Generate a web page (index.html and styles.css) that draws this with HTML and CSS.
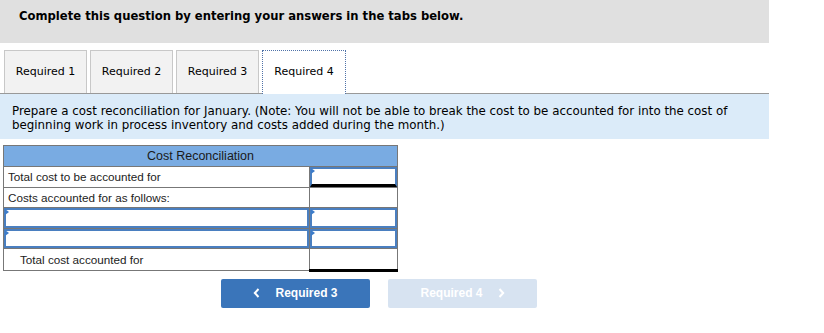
FILE: index.html
```html
<!DOCTYPE html>
<html lang="en">
<head>
  <meta charset="UTF-8">
  <meta name="viewport" content="width=device-width, initial-scale=1.0">
  <title>Cost Reconciliation</title>
  <link rel="stylesheet" href="styles.css">
</head>
<body>
  <div class="page">
    <div class="prompt">Complete this question by entering your answers in the tabs below.</div>

    <div class="tabs">
      <div class="tab">Required 1</div>
      <div class="tab">Required 2</div>
      <div class="tab">Required 3</div>
      <div class="tab active">Required 4</div>
    </div>

    <div class="instructions">
      Prepare a cost reconciliation for January. (Note: You will not be able to break the cost to be accounted for into the cost of beginning work in process inventory and costs added during the month.)
    </div>

    <table class="recon">
      <colgroup>
        <col class="col-label">
        <col class="col-value">
      </colgroup>
      <thead>
        <tr>
          <th colspan="2">Cost Reconciliation</th>
        </tr>
      </thead>
      <tbody>
        <tr>
          <td class="label">Total cost to be accounted for</td>
          <td class="value"><div class="field total"></div></td>
        </tr>
        <tr>
          <td class="label">Costs accounted for as follows:</td>
          <td class="value"></td>
        </tr>
        <tr>
          <td class="label input"><div class="field"></div></td>
          <td class="value"><div class="field"></div></td>
        </tr>
        <tr>
          <td class="label input"><div class="field"></div></td>
          <td class="value"><div class="field"></div></td>
        </tr>
        <tr>
          <td class="label indent">Total cost accounted for</td>
          <td class="value double"></td>
        </tr>
      </tbody>
    </table>

    <div class="nav">
      <button class="nav-btn prev">
        <svg class="chev" width="7" height="10" viewBox="0 0 7 10"><path d="M5.5 1 L1.8 5 L5.5 9" fill="none" stroke="#fff" stroke-width="2"/></svg>
        Required 3
      </button>
      <button class="nav-btn next" disabled>
        Required 4
        <svg class="chev" width="7" height="10" viewBox="0 0 7 10"><path d="M1.5 1 L5.2 5 L1.5 9" fill="none" stroke="#fff" stroke-width="2"/></svg>
      </button>
    </div>
  </div>
</body>
</html>
```

FILE: styles.css
```css
body {
  margin: 0;
  padding: 0;
  background-color: #fff;
  font-family: "DejaVu Sans", Verdana, sans-serif;
  color: #000;
}

.page {
  width: 769px;
}

.prompt {
  background-color: #e0e0e0;
  height: 43px;
  box-sizing: border-box;
  padding: 9px 0 0 19px;
  font-size: 11.6px;
  font-weight: bold;
}

.tabs {
  display: flex;
  gap: 3px;
  margin-top: 7px;
  padding-left: 4px;
  border-bottom: 1px solid #999;
  height: 43px;
}

.tab {
  width: 83px;
  box-sizing: border-box;
  border: 1px solid #c8c8c8;
  border-bottom: none;
  background-color: #f2f2f2;
  font-size: 11px;
  text-align: center;
  line-height: 42px;
}

.tab.active {
  width: 84px;
  background-color: #fff;
  border: 1px dotted #4f72a8;
  border-bottom: none;
  height: 44px;
}

.instructions {
  background-color: #dbebf9;
  height: 45px;
  box-sizing: border-box;
  padding: 10px 12px 0;
  font-size: 11.85px;
  line-height: 14px;
}

.recon {
  border-collapse: collapse;
  table-layout: fixed;
  margin: 6px 0 0 3px;
  width: 394px;
  font-family: "Liberation Sans", Arial, sans-serif;
  font-size: 11.7px;
}

.col-label {
  width: 306px;
}

.col-value {
  width: 88px;
}

.recon th {
  background-color: #79abe2;
  border: 1px solid #777;
  height: 20px;
  padding: 0;
  font-weight: normal;
  font-size: 12.5px;
  color: #1a1a1a;
}

.recon td {
  border: 1px solid #777;
  height: 19.6px;
  padding: 0;
}

.recon .label {
  padding-left: 4px;
  color: #222;
}

.recon .label.input {
  padding-left: 0;
}

.recon .indent {
  padding-left: 16px;
}

.recon .double {
  border-bottom: 3px solid #000;
}

.field {
  position: relative;
  height: 19.6px;
  box-sizing: border-box;
  border: 2px solid #4a7fc0;
}

.field::before {
  content: "";
  position: absolute;
  top: -1px;
  left: -1px;
  border-top: 3px solid transparent;
  border-bottom: 3px solid transparent;
  border-left: 4px solid #3d7cc9;
}

.field.total {
  border-bottom: 3px solid #000;
}

.nav {
  display: flex;
  gap: 18px;
  margin: 7px 0 0 221px;
}

.nav-btn {
  display: flex;
  align-items: center;
  justify-content: center;
  gap: 15px;
  width: 149px;
  height: 29px;
  border: none;
  border-radius: 2px;
  font-family: "Liberation Sans", Arial, sans-serif;
  font-size: 12px;
  font-weight: bold;
  color: #fff;
}

.nav-btn.prev {
  background-color: #3a75ba;
}

.nav-btn.next {
  background-color: #d7e3f1;
}
```
